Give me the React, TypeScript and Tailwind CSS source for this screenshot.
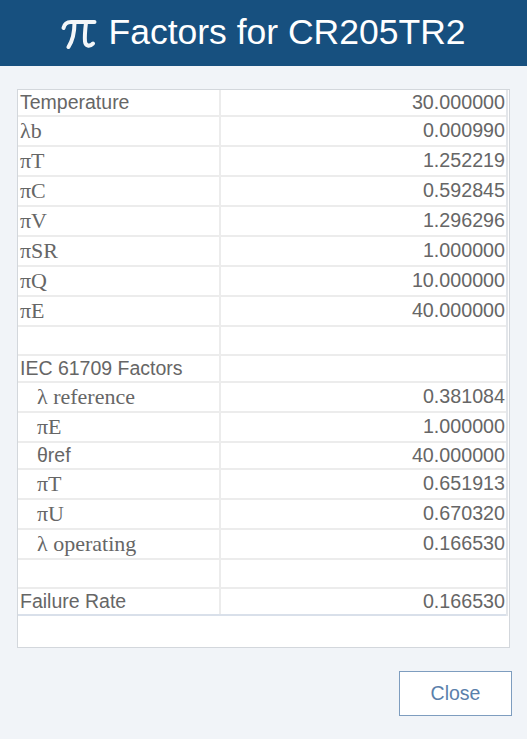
import * as React from "react"

type Row = {
  label: string
  value?: string
  kind: "sans" | "serif" | "blank"
  indent?: boolean
}

const rows: Row[] = [
  { label: "Temperature", value: "30.000000", kind: "sans" },
  { label: "λb", value: "0.000990", kind: "serif" },
  { label: "πT", value: "1.252219", kind: "serif" },
  { label: "πC", value: "0.592845", kind: "serif" },
  { label: "πV", value: "1.296296", kind: "serif" },
  { label: "πSR", value: "1.000000", kind: "serif" },
  { label: "πQ", value: "10.000000", kind: "serif" },
  { label: "πE", value: "40.000000", kind: "serif" },
  { label: "", kind: "blank" },
  { label: "IEC 61709 Factors", kind: "sans" },
  { label: "λ reference", value: "0.381084", kind: "serif", indent: true },
  { label: "πE", value: "1.000000", kind: "serif", indent: true },
  { label: "θref", value: "40.000000", kind: "sans", indent: true },
  { label: "πT", value: "0.651913", kind: "serif", indent: true },
  { label: "πU", value: "0.670320", kind: "serif", indent: true },
  { label: "λ operating", value: "0.166530", kind: "serif", indent: true },
  { label: "", kind: "blank" },
  { label: "Failure Rate", value: "0.166530", kind: "sans" },
]

function PiIcon() {
  return (
    <svg width="36" height="38" viewBox="0 0 36 38" fill="none" className="shrink-0">
      <g stroke="#ffffff" strokeWidth="4" strokeLinecap="round" strokeLinejoin="round" opacity="0.95">
        <path d="M2.5 14 C3.5 9.5 6 8 10 8 L33.5 8" />
        <path d="M13.5 8.5 C13.5 18 12 26 7.5 33" />
        <path d="M25 8.5 C24 17 23.5 23 24 27.5 C24.5 32 28.5 33 32 29.5" />
      </g>
    </svg>
  )
}

export default function App() {
  return (
    <div
      className="flex h-[739px] w-[527px] flex-col bg-[#f1f4f8]"
      style={{ fontFamily: '"Liberation Sans", Arial, sans-serif' }}
    >
      {/* Header */}
      <div className="flex h-[66px] items-center justify-center gap-[11px] bg-[#17507f]">
        <PiIcon />
        <h1 className="text-[35.5px] leading-none text-white">Factors for CR205TR2</h1>
      </div>

      {/* Table */}
      <div className="mx-[17px] mt-[23px] h-[559px] border border-[#d3d7dc] bg-white">
        <div className="w-[490px] border-r-2 border-[#e3e6ea]">
          {rows.map((row, i) => {
            const h =
              row.kind === "sans" ? "h-[27px]" : row.kind === "serif" ? "h-[30px]" : "h-[29px]"
            const font =
              row.kind === "serif"
                ? "font-['Liberation_Serif',serif] text-[22px]"
                : "text-[19.5px]"
            const last = i === rows.length - 1
            return (
              <div
                key={i}
                className={`flex ${h} border-b-2 ${last ? "border-[#d9e0ea]" : "border-[#ececec]"}`}
              >
                <div
                  className={`flex w-[203px] items-center border-r-2 border-[#ececec] ${
                    row.indent ? "pl-[19px]" : "pl-[2px]"
                  } ${font} text-[#666666] leading-none`}
                >
                  {row.label}
                </div>
                <div className="flex flex-1 items-center justify-end pr-[1px] text-[19.7px] leading-none text-[#666666]">
                  {row.value}
                </div>
              </div>
            )
          })}
        </div>
      </div>

      {/* Footer */}
      <div className="flex justify-end pr-[15px] pt-[23px]">
        <button className="h-[45px] w-[113px] border border-[#7e9dbf] bg-white text-[19.5px] text-[#5a80ab]">
          Close
        </button>
      </div>
    </div>
  )
}
